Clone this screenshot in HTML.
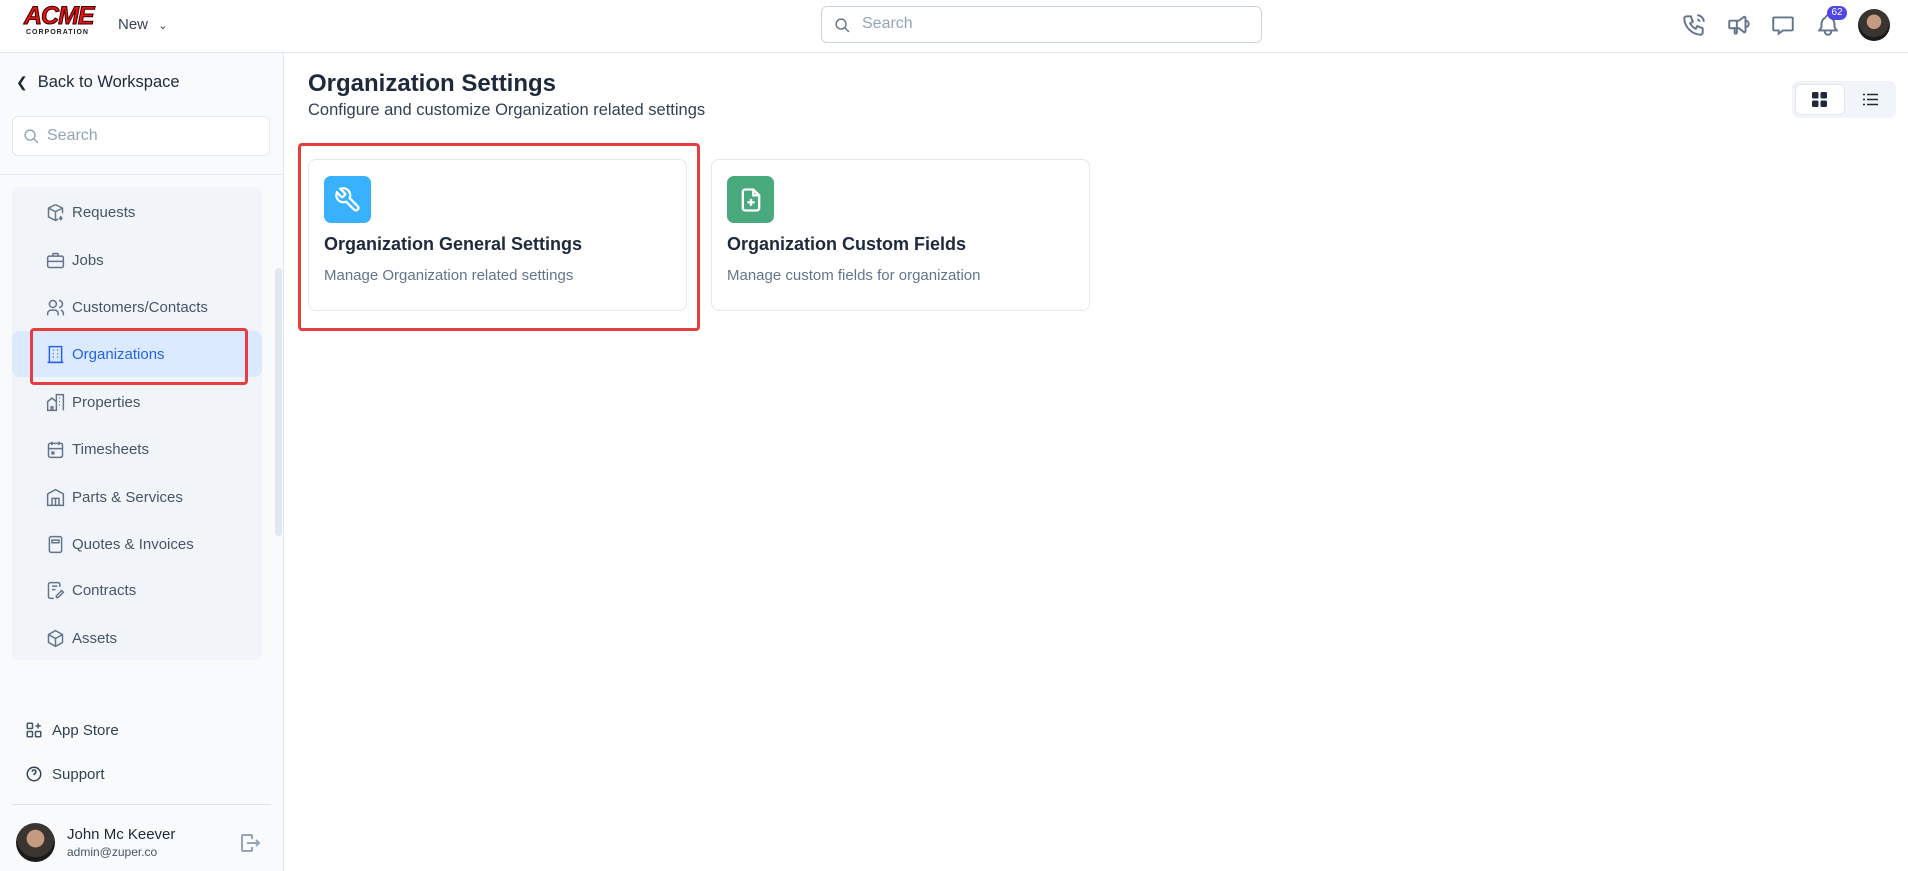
<!DOCTYPE html>
<html><head><meta charset="utf-8"><style>
*{box-sizing:border-box;margin:0;padding:0}
body{width:1908px;height:871px;overflow:hidden;background:#fff;font-family:"Liberation Sans",sans-serif;color:#1e293b;position:relative}
.abs{position:absolute}
.hdr{left:0;top:0;width:1908px;height:53px;border-bottom:1px solid #e2e8f0;background:#fff}
.side{left:0;top:53px;width:284px;height:818px;background:#f8fafc;border-right:1px solid #e2e8f0}
.nav{left:12px;top:187px;width:250px;height:473px;background:#f1f5f9;border-radius:8px}
.item{position:absolute;left:0;width:250px;height:46px;display:flex;align-items:center;padding-left:33px;font-size:15px;color:#475569}
.item svg{width:21px;height:21px;margin-right:6px;stroke:#64748b;fill:none;stroke-width:1.7}
.card{border:1px solid #e2e8f0;border-radius:8px;background:#fff;width:379px;height:152px}
.ic{position:absolute;left:15px;top:16px;width:47px;height:47px;border-radius:7px;display:flex;align-items:center;justify-content:center}
.ct{position:absolute;left:15px;top:74px;font-size:18px;font-weight:bold;color:#1e293b}
.cd{position:absolute;left:15px;top:107px;font-size:15px;color:#64748b}
.ti svg{width:26px;height:26px;stroke:#64748b;fill:none;stroke-width:1.8}
</style></head><body>
<div class="abs hdr">
 <div class="abs" style="left:24px;top:4px;width:72px;height:36px">
  <div style="font:italic 900 25px 'Liberation Sans';color:#e11;letter-spacing:-1px;line-height:25px;-webkit-text-stroke:1px #300">ACME</div>
  <div style="font:bold 7px 'Liberation Sans';color:#222;letter-spacing:1px;margin-left:2px">CORPORATION</div>
 </div>
 <div class="abs" style="left:118px;top:16px;font-size:15px;color:#334155">New <span style="font-size:11px;margin-left:6px">&#8964;</span></div>
 <div class="abs" style="left:821px;top:6px;width:441px;height:37px;border:1px solid #cbd5e1;border-radius:6px">
  <svg class="abs" style="left:12px;top:10px" width="17" height="17" viewBox="0 0 24 24" fill="none" stroke="#64748b" stroke-width="2"><circle cx="10" cy="10" r="7"/><path d="M15 15l6 6"/></svg>
  <span class="abs" style="left:40px;top:8px;font-size:16px;color:#94a3b8">Search</span>
 </div>
 <div class="abs ti" style="left:1681px;top:12px"><svg viewBox="0 0 24 24"><path d="M5 4h4l2 5-2.5 1.5a11 11 0 005 5L15 13l5 2v4a2 2 0 01-2 2A16 16 0 013 6a2 2 0 012-2M15 3a6 6 0 016 6M15 7a2 2 0 012 2"/></svg></div>
 <div class="abs ti" style="left:1726px;top:12px"><svg viewBox="0 0 24 24"><path d="M18 8a3 3 0 010 6M10 8v11a1 1 0 01-2 0v-5M12 8l4.5-3.5A1 1 0 0118 5.2v12.6a1 1 0 01-1.5.8L12 15H4a1 1 0 01-1-1v-5a1 1 0 011-1h8"/></svg></div>
 <div class="abs ti" style="left:1770px;top:12px"><svg viewBox="0 0 24 24"><path d="M4 5h16a1 1 0 011 1v10a1 1 0 01-1 1h-8l-4 3v-3H4a1 1 0 01-1-1V6a1 1 0 011-1M8 11h.01M12 11h.01M16 11h.01"/></svg></div>
 <div class="abs ti" style="left:1815px;top:12px"><svg viewBox="0 0 24 24"><path d="M10 5a2 2 0 014 0 7 7 0 014 6v3l2 3H4l2-3v-3a7 7 0 014-6M9 17v1a3 3 0 006 0v-1"/></svg></div>
 <div class="abs" style="left:1827px;top:6px;width:20px;height:14px;border-radius:7px;background:#4f46e5;color:#fff;font-size:10px;text-align:center;line-height:14px">62</div>
 <div class="abs" style="left:1858px;top:9px;width:32px;height:32px;border-radius:50%;background:radial-gradient(circle at 50% 40%,#c49a80 0 28%,#3a3530 30% 60%,#1a1a1a 62%)"></div>
</div>
<div class="abs side">
 <div class="abs" style="left:16px;top:20px;font-size:16.5px;color:#1e293b"><span style="font-size:14px;margin-right:10px">&#10094;</span>Back to Workspace</div>
 <div class="abs" style="left:12px;top:63px;width:258px;height:40px;background:#fff;border:1px solid #e2e8f0;border-radius:6px">
  <svg class="abs" style="left:10px;top:11px" width="17" height="17" viewBox="0 0 24 24" fill="none" stroke="#94a3b8" stroke-width="2"><circle cx="10" cy="10" r="7"/><path d="M15 15l6 6"/></svg>
  <span class="abs" style="left:34px;top:10px;font-size:16px;color:#94a3b8">Search</span>
 </div>
 <div class="abs" style="left:0;top:121px;width:283px;border-top:1px solid #e2e8f0"></div>
 <div class="abs" style="left:275px;top:215px;width:7px;height:268px;border-radius:4px;background:#e2e8f0"></div>
</div>
<div class="abs nav">
 <div class="item" style="top:2px"><svg viewBox="0 0 24 24"><path d="M12 3l8 4v6M12 3L4 7v10l8 4 3-1.5M4 7l8 4 8-4M12 11v10M18 16v5M16 18l2 2 2-2"/></svg>Requests</div>
 <div class="item" style="top:50px"><svg viewBox="0 0 24 24"><rect x="3" y="7" width="18" height="13" rx="2"/><path d="M9 7V5a1 1 0 011-1h4a1 1 0 011 1v2M3 13h18"/></svg>Jobs</div>
 <div class="item" style="top:97px"><svg viewBox="0 0 24 24"><circle cx="9" cy="8" r="4"/><path d="M3 21v-2a4 4 0 014-4h4a4 4 0 014 4v2M16 4a4 4 0 010 8M21 21v-2a4 4 0 00-3-4"/></svg>Customers/Contacts</div>
 <div class="item" style="top:144px;background:#dbeafe;color:#2563eb;border-radius:8px"><svg viewBox="0 0 24 24" style="stroke:#2563eb"><rect x="5" y="3" width="14" height="18"/><path d="M3 21h18M9 7h1M14 7h1M9 11h1M14 11h1M9 15h1M14 15h1"/></svg>Organizations</div>
 <div class="item" style="top:192px"><svg viewBox="0 0 24 24"><path d="M3 21V11l5-4 5 4v10zM13 21V3h8v18M7 21v-4h2v4M16 7h1M16 11h1M16 15h1"/></svg>Properties</div>
 <div class="item" style="top:239px"><svg viewBox="0 0 24 24"><rect x="4" y="5" width="16" height="16" rx="2"/><path d="M16 3v4M8 3v4M4 11h16M8 15h2v2H8z"/></svg>Timesheets</div>
 <div class="item" style="top:287px"><svg viewBox="0 0 24 24"><path d="M3 21V8l9-5 9 5v13zM8 21v-8h8v8M12 13v8"/></svg>Parts &amp; Services</div>
 <div class="item" style="top:334px"><svg viewBox="0 0 24 24"><rect x="5" y="3" width="14" height="18" rx="2"/><path d="M8 7h8v3H8zM8 14h.01M12 14h.01M16 14h.01M8 17h.01M12 17h.01M16 17h.01"/></svg>Quotes &amp; Invoices</div>
 <div class="item" style="top:380px"><svg viewBox="0 0 24 24"><path d="M17 8V5a2 2 0 00-2-2H6a2 2 0 00-2 2v14a2 2 0 002 2h4M8 7h6M8 11h4M19 12l2 2-6 6h-2v-2z"/></svg>Contracts</div>
 <div class="item" style="top:428px"><svg viewBox="0 0 24 24"><path d="M12 3l8 4.5v9L12 21l-8-4.5v-9zM12 12l8-4.5M12 12v9M12 12L4 7.5"/></svg>Assets</div>
</div>
<div class="abs" style="left:30px;top:328px;width:218px;height:57px;border:3px solid #e53e3e;border-radius:4px"></div>
<div class="abs" style="left:25px;top:721px;font-size:15px;color:#334155;display:flex;align-items:center"><svg width="18" height="18" viewBox="0 0 24 24" fill="none" stroke="#475569" stroke-width="2" style="margin-right:9px"><rect x="3" y="3" width="7" height="7" rx="1"/><rect x="3" y="14" width="7" height="7" rx="1"/><rect x="14" y="14" width="7" height="7" rx="1"/><path d="M17.5 3v7M14 6.5h7"/></svg>App Store</div>
<div class="abs" style="left:25px;top:765px;font-size:15px;color:#334155;display:flex;align-items:center"><svg width="18" height="18" viewBox="0 0 24 24" fill="none" stroke="#334155" stroke-width="2" style="margin-right:9px"><circle cx="12" cy="12" r="9"/><path d="M9.5 9a2.5 2.5 0 114 2c-1 .7-1.5 1.2-1.5 2.5M12 17h.01"/></svg>Support</div>
<div class="abs" style="left:12px;top:804px;width:259px;border-top:1px solid #dbe3ee"></div>
<div class="abs" style="left:16px;top:823px;width:39px;height:39px;border-radius:50%;background:radial-gradient(circle at 50% 40%,#c49a80 0 28%,#3a3530 30% 60%,#1a1a1a 62%)"></div>
<div class="abs" style="left:67px;top:826px;font-size:15px;color:#1e293b">John Mc Keever</div>
<div class="abs" style="left:67px;top:845px;font-size:12px;color:#475569">admin@zuper.co</div>
<svg class="abs" style="left:238px;top:831px" width="24" height="24" viewBox="0 0 24 24" fill="none" stroke="#94a3b8" stroke-width="2"><path d="M14 8V5a1 1 0 00-1-1H5a1 1 0 00-1 1v14a1 1 0 001 1h8a1 1 0 001-1v-3M9 12h12M18 9l3 3-3 3"/></svg>

<div class="abs" style="left:308px;top:70px;font-size:24px;font-weight:bold;color:#1e293b">Organization Settings</div>
<div class="abs" style="left:308px;top:101px;font-size:16.5px;color:#334155">Configure and customize Organization related settings</div>
<div class="abs" style="left:1792px;top:81px;width:104px;height:37px;border-radius:7px;background:#f1f5f9">
 <div class="abs" style="left:3px;top:3px;width:50px;height:31px;border-radius:6px;background:#fff;border:1px solid #e2e8f0"></div>
 <svg class="abs" style="left:20px;top:11px" width="15" height="15" viewBox="0 0 15 15" fill="#1e293b"><rect x="0" y="0" width="6.5" height="6.5" rx="1.5"/><rect x="8.5" y="0" width="6.5" height="6.5" rx="1.5"/><rect x="0" y="8.5" width="6.5" height="6.5" rx="1.5"/><rect x="8.5" y="8.5" width="6.5" height="6.5" rx="1.5"/></svg>
 <svg class="abs" style="left:71px;top:11px" width="15" height="15" viewBox="0 0 15 15" stroke="#1e293b" stroke-width="1.6"><path d="M0 2.5h2M4 2.5h11M0 7.5h2M4 7.5h11M0 12.5h2M4 12.5h11"/></svg>
</div>
<div class="abs card" style="left:308px;top:159px">
 <div class="ic" style="background:#38b2ff"><svg width="28" height="28" viewBox="0 0 24 24" fill="none" stroke="#fff" stroke-width="2"><path d="M14.7 6.3a1 1 0 000 1.4l1.6 1.6a1 1 0 001.4 0l3.8-3.8a6 6 0 01-7.9 7.9l-6.9 6.9a2.1 2.1 0 01-3-3l6.9-6.9a6 6 0 017.9-7.9z" transform="scale(-1,1) translate(-24,0)"/></svg></div>
 <div class="ct">Organization General Settings</div>
 <div class="cd">Manage Organization related settings</div>
</div>
<div class="abs card" style="left:711px;top:159px">
 <div class="ic" style="background:#48a97c"><svg width="28" height="28" viewBox="0 0 24 24" fill="none" stroke="#fff" stroke-width="2"><path d="M14 3H7a2 2 0 00-2 2v14a2 2 0 002 2h10a2 2 0 002-2V8zM14 3v5h5M12 11v6M9 14h6"/></svg></div>
 <div class="ct">Organization Custom Fields</div>
 <div class="cd">Manage custom fields for organization</div>
</div>
<div class="abs" style="left:298px;top:143px;width:402px;height:188px;border:3px solid #e53e3e;border-radius:4px"></div>
</body></html>
